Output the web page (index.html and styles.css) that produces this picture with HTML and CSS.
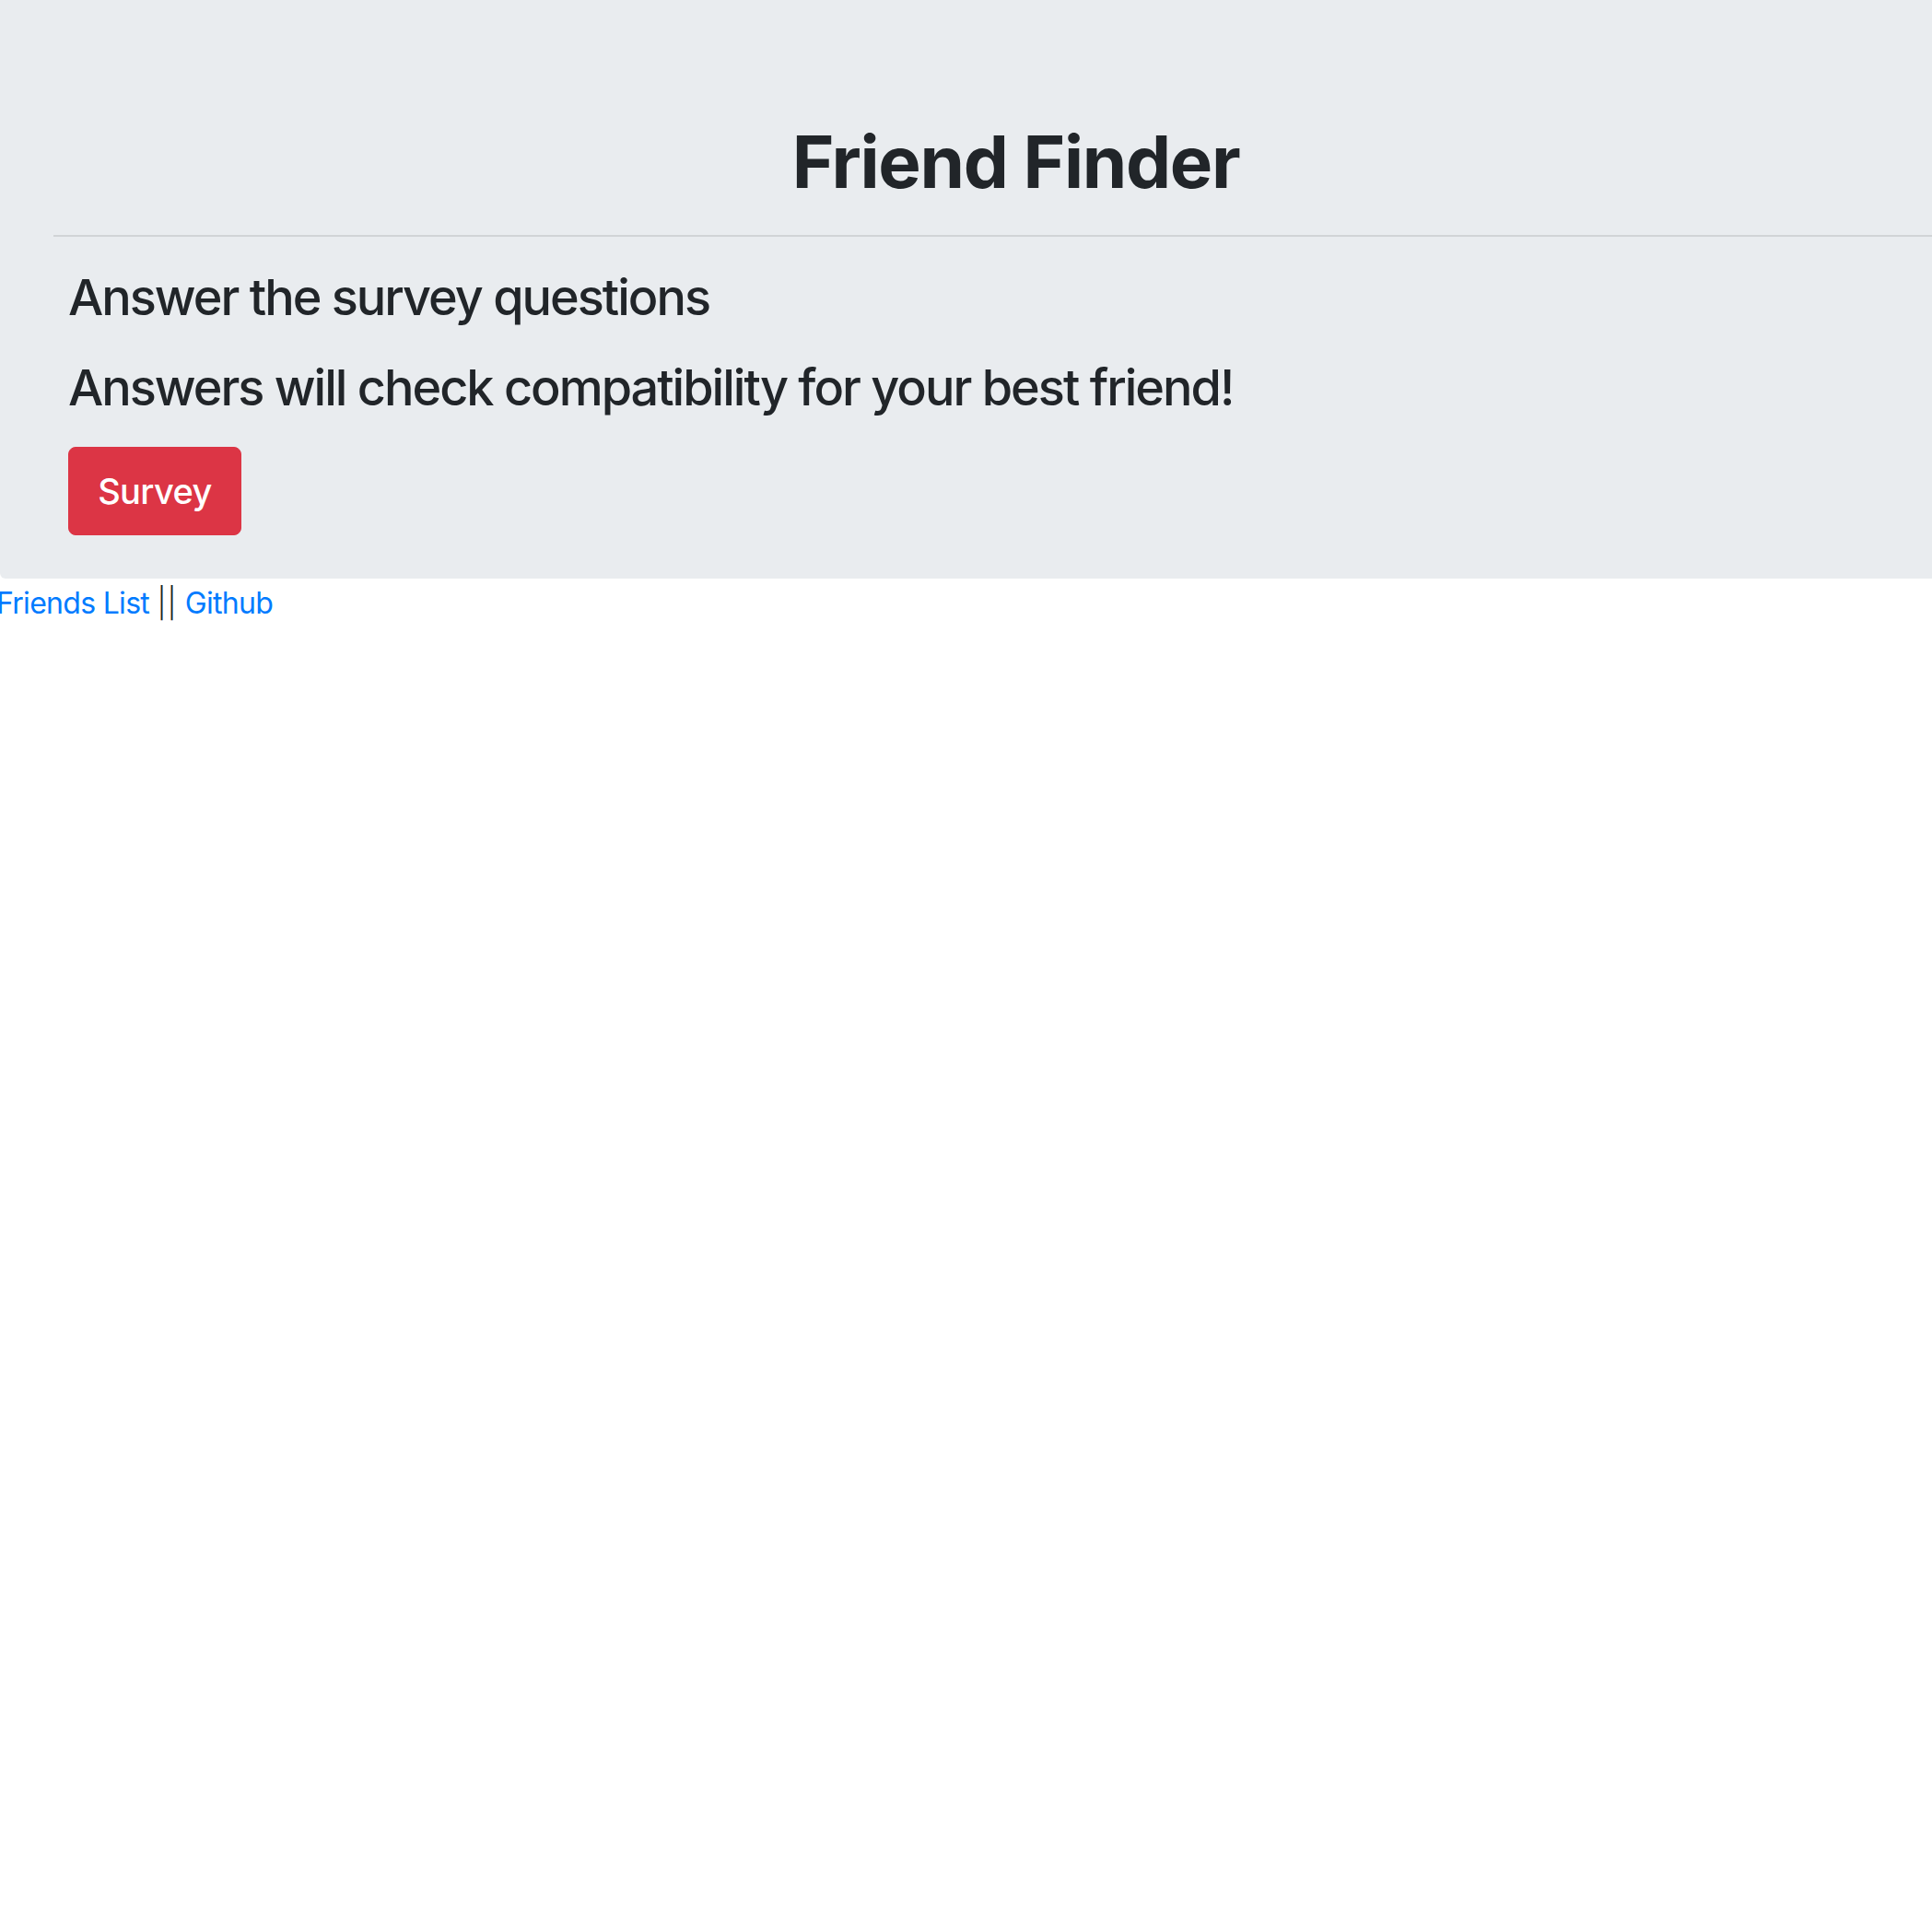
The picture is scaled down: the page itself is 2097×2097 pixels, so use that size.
FILE: index.html
```html
<!DOCTYPE html>
<html lang="en">
<head>
<meta charset="utf-8">
<title>Friend Finder</title>
<link rel="stylesheet" href="styles.css">
</head>
<body>
<div class="jumbotron">
  <h1 class="title">Friend Finder</h1>
  <hr class="rule">
  <div class="content">
    <h3 class="sub">Answer the survey questions</h3>
    <h3 class="sub">Answers will check compatibility for your best friend!</h3>
    <a class="btn" href="#">Survey</a>
  </div>
</div>
<div class="links"><a href="#">Friends List</a> <span class="sep">||</span> <a href="#">Github</a></div>
</body>
</html>
```

FILE: styles.css
```css
html, body {
  margin: 0;
  padding: 0;
  background: #fff;
}
body {
  font-family: Inter, "Noto Sans", "DejaVu Sans", sans-serif;
  color: #212529;
  overflow-x: hidden;
}
.jumbotron {
  background: #e9ecef;
  height: 628px;
  box-sizing: border-box;
  padding-top: 128px;
  border-bottom-left-radius: 6px;
}
.title {
  margin: 0;
  padding-left: 108px;
  text-align: center;
  font-size: 78px;
  font-weight: 700;
  line-height: 96px;
  letter-spacing: -1.35px;
}
.rule {
  margin: 31px 0 0 58px;
  border: 0;
  border-top: 2px solid rgba(0, 0, 0, 0.1);
  height: 0;
}
.content {
  padding-left: 74px;
  padding-top: 32px;
}
.sub {
  margin: 0 0 31px;
  font-size: 54px;
  font-weight: 500;
  line-height: 67px;
  letter-spacing: -2px;
}
.btn {
  display: inline-block;
  box-sizing: border-box;
  width: 188px;
  height: 96px;
  line-height: 94px;
  text-align: center;
  background: #dc3545;
  border: 1px solid #dc3545;
  border-radius: 8px;
  color: #fff;
  font-size: 38px;
  font-weight: 500;
  letter-spacing: -0.6px;
  text-decoration: none;
}
.links {
  padding-top: 3px;
  font-size: 32px;
  line-height: 48px;
  text-indent: -4px;
  letter-spacing: -0.7px;
  color: #212529;
}
.sep {
  letter-spacing: 1px;
  font-weight: 300;
}
.links a {
  color: #007bff;
  text-decoration: none;
}
```
